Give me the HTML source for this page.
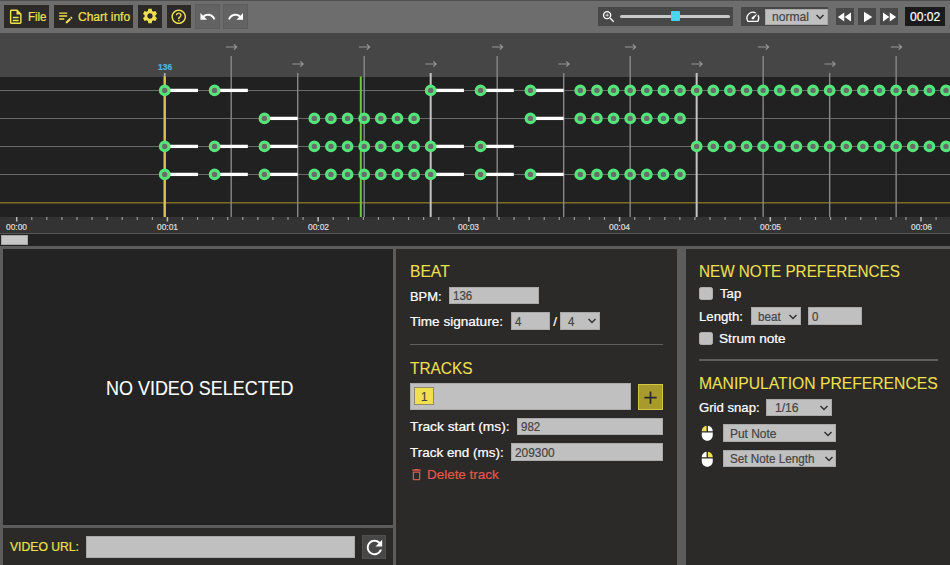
<!DOCTYPE html><html><head><meta charset='utf-8'><title>Chart editor</title><style>
*{box-sizing:border-box;margin:0;padding:0}
html,body{width:950px;height:565px;overflow:hidden;background:#5c5c5c;font-family:"Liberation Sans",sans-serif}
body{position:relative}
.a{position:absolute}
.t{-webkit-text-stroke:0.22px currentColor;position:absolute;white-space:pre;line-height:1;display:block;transform-origin:0 0}
svg{position:absolute;display:block;overflow:visible}
.btn{position:absolute;background:#2b2a29}
.in{position:absolute;background:#c0c0c0;border:1px solid #a9a9a9}
</style></head><body>
<div class="a" style="left:0;top:0;width:950px;height:33px;background:#6d6d6d;border-top:1px solid #4f4f4f"></div>
<div class="a" style="left:4px;top:5px;width:45px;height:23px;background:#2b2a29;"></div>
<svg style="left:6.95px;top:7.85px" width="17.5" height="17.5" viewBox="0 0 24 24"><path fill="#f0e04f" d="M8 16h8v2H8zm0-4h8v2H8zm6-10H6c-1.1 0-2 .9-2 2v16c0 1.1.89 2 1.99 2H18c1.1 0 2-.9 2-2V8l-6-6zm4 18H6V4h7v5h5v11z"/></svg>
<span class="t" style="left:28.00px;top:10.75px;font-size:12.5px;color:#f0e04f;transform:scaleX(0.9185);">File</span>
<div class="a" style="left:54px;top:5px;width:79px;height:23px;background:#2b2a29;"></div>
<svg style="left:56.8px;top:7.7px" width="17.5" height="17.5" viewBox="0 0 24 24"><path fill="#f0e04f" d="M3 10h11v2H3v-2zm0-2h11V6H3v2zm0 8h7v-2H3v2zm15.01-3.13.71-.71c.39-.39 1.02-.39 1.41 0l.71.71c.39.39.39 1.02 0 1.41l-.71.71-2.12-2.12zm-.71.71-5.3 5.3V21h2.12l5.3-5.3-2.12-2.12z"/></svg>
<span class="t" style="left:78.40px;top:10.75px;font-size:12.5px;color:#f0e04f;transform:scaleX(0.9614);">Chart info</span>
<div class="a" style="left:138px;top:5px;width:24px;height:23px;background:#2b2a29;"></div>
<svg style="left:141px;top:7.2px" width="18" height="18" viewBox="0 0 24 24"><path fill="#f0e04f" d="M19.14,12.94c0.04-0.3,0.06-0.61,0.06-0.94c0-0.32-0.02-0.64-0.07-0.94l2.03-1.58c0.18-0.14,0.23-0.41,0.12-0.61 l-1.92-3.32c-0.12-0.22-0.37-0.29-0.59-0.22l-2.39,0.96c-0.5-0.38-1.03-0.7-1.62-0.94L14.4,2.81c-0.04-0.24-0.24-0.41-0.48-0.41 h-3.84c-0.24,0-0.43,0.17-0.47,0.41L9.25,5.35C8.66,5.59,8.12,5.92,7.63,6.29L5.24,5.33c-0.22-0.08-0.47,0-0.59,0.22L2.74,8.87 C2.62,9.08,2.66,9.34,2.86,9.48l2.03,1.58C4.84,11.36,4.8,11.69,4.8,12s0.02,0.64,0.07,0.94l-2.03,1.58 c-0.18,0.14-0.23,0.41-0.12,0.61l1.92,3.32c0.12,0.22,0.37,0.29,0.59,0.22l2.39-0.96c0.5,0.38,1.03,0.7,1.62,0.94l0.36,2.54 c0.05,0.24,0.24,0.41,0.48,0.41h3.84c0.24,0,0.44-0.17,0.47-0.41l0.36-2.54c0.59-0.24,1.13-0.56,1.62-0.94l2.39,0.96 c0.22,0.08,0.47,0,0.59-0.22l1.92-3.32c0.12-0.22,0.07-0.47-0.12-0.61L19.14,12.94z M12,15.6c-1.98,0-3.6-1.62-3.6-3.6 s1.62-3.6,3.6-3.6s3.6,1.62,3.6,3.6S13.98,15.6,12,15.6z"/></svg>
<div class="a" style="left:167px;top:5px;width:24px;height:23px;background:#2b2a29;"></div>
<svg style="left:170.1px;top:7.95px" width="17.5" height="17.5" viewBox="0 0 24 24"><path fill="#f0e04f" d="M11 18h2v-2h-2v2zm1-16C6.48 2 2 6.48 2 12s4.48 10 10 10 10-4.48 10-10S17.52 2 12 2zm0 18c-4.41 0-8-3.59-8-8s3.59-8 8-8 8 3.59 8 8-3.59 8-8 8zm0-14c-2.21 0-4 1.79-4 4h2c0-1.1.9-2 2-2s2 .9 2 2c0 2-3 1.75-3 5h2c0-2.25 3-2.5 3-5 0-2.21-1.79-4-4-4z"/></svg>
<div class="a" style="left:194.7px;top:4.2px;width:24.900000000000006px;height:24.400000000000002px;background:#636363;border:1px solid #5d5d5d;"></div>
<svg style="left:198.9px;top:7.6px" width="17.5" height="17.5" viewBox="0 0 24 24"><path fill="#fff" d="M12.5 8c-2.65 0-5.05.99-6.9 2.6L2 7v9h9l-3.62-3.62c1.39-1.16 3.16-1.88 5.12-1.88 3.54 0 6.55 2.31 7.6 5.5l2.37-.78C21.08 11.03 17.15 8 12.5 8z"/></svg>
<div class="a" style="left:223.1px;top:4.2px;width:24.80000000000001px;height:24.400000000000002px;background:#636363;border:1px solid #5d5d5d;"></div>
<svg style="left:227.1px;top:7.6px" width="17.5" height="17.5" viewBox="0 0 24 24"><path fill="#fff" d="M18.4 10.6C16.55 8.99 14.15 8 11.5 8c-4.65 0-8.58 3.03-9.96 7.22L3.9 16c1.05-3.19 4.05-5.5 7.6-5.5 1.95 0 3.73.72 5.12 1.88L13 16h9V7l-3.6 3.6z"/></svg>
<div class="a" style="left:597.6px;top:7.2px;width:135.39999999999998px;height:18.400000000000002px;background:#484848;"></div>
<svg style="left:601.3px;top:9.4px" width="15.5" height="15.5" viewBox="0 0 24 24"><path fill="#fff" d="M15.5 14h-.79l-.28-.27C15.41 12.59 16 11.11 16 9.5 16 5.91 13.09 3 9.5 3S3 5.91 3 9.5 5.91 16 9.5 16c1.61 0 3.09-.59 4.23-1.57l.27.28v.79l5 4.99L20.49 19l-4.99-5zm-6 0C7.01 14 5 11.99 5 9.5S7.01 5 9.5 5 14 7.01 14 9.5 11.99 14 9.5 14zM12 10h-2v2H9v-2H7V9h2V7h1v2h2v1z"/></svg>
<div class="a" style="left:620.3px;top:15.1px;width:109.5px;height:3.4px;border-radius:2px;background:#c8c8c8"></div>
<div class="a" style="left:670.9px;top:11.4px;width:9.6px;height:9.5px;border-radius:1px;background:#4bd5ec"></div>
<div class="a" style="left:741px;top:7.2px;width:87px;height:18.400000000000002px;background:#484848;"></div>
<svg style="left:744.6px;top:8.8px" width="15.7" height="15.7" viewBox="0 0 24 24"><path fill="#fff" d="M20.38 8.57l-1.23 1.85a8 8 0 0 1-.22 7.58H5.07A8 8 0 0 1 15.58 6.85l1.85-1.23A10 10 0 0 0 3.35 19a2 2 0 0 0 1.72 1h13.85a2 2 0 0 0 1.74-1 10 10 0 0 0-.27-10.44zm-9.79 6.84a2 2 0 0 0 2.83 0l5.66-8.49-8.49 5.66a2 2 0 0 0 0 2.83z"/></svg>
<div class="in" style="left:764.7px;top:8.8px;width:63.2px;height:16px"></div>
<span class="t" style="left:772.00px;top:10.00px;font-size:13px;color:#454545;transform:scaleX(0.9311);">normal</span>
<svg style="left:815px;top:13.2px" width="10" height="8" viewBox="0 0 10 8"><path d="M1.5 2 L5 5.5 L8.5 2" fill="none" stroke="#333" stroke-width="1.5"/></svg>
<div class="a" style="left:836.1px;top:8px;width:17.5px;height:17.4px;background:#484848;"></div>
<svg style="left:836.1px;top:7.65px" width="18" height="18" viewBox="0 0 24 24"><path fill="#fff" d="M11 18V6l-8.5 6 8.5 6zm.5-6l8.5 6V6l-8.5 6z"/></svg>
<div class="a" style="left:857.9px;top:8px;width:18.0px;height:17.4px;background:#484848;"></div>
<svg style="left:858px;top:7.7px" width="18" height="18" viewBox="0 0 24 24"><path fill="#fff" d="M8 5v14l11-7z"/></svg>
<div class="a" style="left:880.2px;top:8px;width:17.699999999999932px;height:17.4px;background:#484848;"></div>
<svg style="left:879.7px;top:7.7px" width="18" height="18" viewBox="0 0 24 24"><path fill="#fff" d="M4 18l8.5-6L4 6v12zm9-12v12l8.5-6L13 6z"/></svg>
<div class="a" style="left:905px;top:7px;width:40px;height:18.7px;background:#1a1a1a;"></div>
<span class="t" style="left:910.00px;top:10.75px;font-size:12.5px;color:#fff;transform:scaleX(0.9655);">00:02</span>
<div class="a" style="left:0;top:33px;width:950px;height:44px;background:#464646"></div>
<div class="a" style="left:0;top:76.5px;width:950px;height:141px;background:#212121"></div>
<div class="a" style="left:0;top:217px;width:950px;height:17px;background:#333;border-bottom:1px solid #555"></div>
<div class="a" style="left:0;top:234px;width:950px;height:12px;background:#222"></div>
<div class="a" style="left:0.5px;top:234.5px;width:27.7px;height:10.6px;background:#c6c6c6;border:1px solid #a6a6a6"></div>
<svg style="left:0;top:0" width="950" height="250" viewBox="0 0 950 250"><rect x="0" y="90" width="950" height="1" fill="#6a6a6a"/><rect x="0" y="118" width="950" height="1" fill="#6a6a6a"/><rect x="0" y="146" width="950" height="1" fill="#6a6a6a"/><rect x="0" y="174" width="950" height="1" fill="#6a6a6a"/><rect x="0" y="202" width="950" height="1.5" fill="#7d6f22"/><rect x="163.81" y="73" width="1.8" height="4" fill="#aaa"/><rect x="163.51" y="76.5" width="2.4" height="140.5" fill="#d9c54f"/><rect x="230.50" y="56" width="1.4" height="161" fill="#888888"/><path d="M225.90 47 H236.60 M233.80 44.3 L236.70 47 L233.80 49.7" fill="none" stroke="#969696" stroke-width="1.15"/><rect x="297.00" y="73" width="1.4" height="144" fill="#888888"/><path d="M292.40 64 H303.10 M300.30 61.3 L303.20 64 L300.30 66.7" fill="none" stroke="#969696" stroke-width="1.15"/><rect x="363.49" y="56" width="1.4" height="161" fill="#888888"/><path d="M358.89 47 H369.59 M366.79 44.3 L369.69 47 L366.79 49.7" fill="none" stroke="#969696" stroke-width="1.15"/><rect x="429.68" y="73" width="2.0" height="144" fill="#c4c4c4"/><path d="M425.38 64 H436.08 M433.28 61.3 L436.18 64 L433.28 66.7" fill="none" stroke="#969696" stroke-width="1.15"/><rect x="496.48" y="56" width="1.4" height="161" fill="#888888"/><path d="M491.88 47 H502.58 M499.78 44.3 L502.68 47 L499.78 49.7" fill="none" stroke="#969696" stroke-width="1.15"/><rect x="562.97" y="73" width="1.4" height="144" fill="#888888"/><path d="M558.37 64 H569.07 M566.27 61.3 L569.17 64 L566.27 66.7" fill="none" stroke="#969696" stroke-width="1.15"/><rect x="629.47" y="56" width="1.4" height="161" fill="#888888"/><path d="M624.87 47 H635.57 M632.77 44.3 L635.67 47 L632.77 49.7" fill="none" stroke="#969696" stroke-width="1.15"/><rect x="695.66" y="73" width="2.0" height="144" fill="#c4c4c4"/><path d="M691.36 64 H702.06 M699.26 61.3 L702.16 64 L699.26 66.7" fill="none" stroke="#969696" stroke-width="1.15"/><rect x="762.45" y="56" width="1.4" height="161" fill="#888888"/><path d="M757.85 47 H768.55 M765.75 44.3 L768.65 47 L765.75 49.7" fill="none" stroke="#969696" stroke-width="1.15"/><rect x="828.95" y="73" width="1.4" height="144" fill="#888888"/><path d="M824.35 64 H835.05 M832.25 61.3 L835.15 64 L832.25 66.7" fill="none" stroke="#969696" stroke-width="1.15"/><rect x="895.44" y="56" width="1.4" height="161" fill="#888888"/><path d="M890.84 47 H901.54 M898.74 44.3 L901.64 47 L898.74 49.7" fill="none" stroke="#969696" stroke-width="1.15"/><rect x="961.64" y="73" width="2.0" height="144" fill="#c4c4c4"/><path d="M957.34 64 H968.04 M965.24 61.3 L968.14 64 L965.24 66.7" fill="none" stroke="#969696" stroke-width="1.15"/><rect x="359.8" y="76.5" width="2" height="140.5" fill="#6cc83c"/><rect x="164.71" y="88.75" width="33.25" height="3.3" fill="#fff"/><circle cx="164.71" cy="90.40" r="4.3" fill="#6a6a6a" stroke="#54e57a" stroke-width="3.2"/><rect x="214.58" y="88.75" width="33.25" height="3.3" fill="#fff"/><circle cx="214.58" cy="90.40" r="4.3" fill="#6a6a6a" stroke="#54e57a" stroke-width="3.2"/><rect x="430.68" y="88.75" width="33.25" height="3.3" fill="#fff"/><circle cx="430.68" cy="90.40" r="4.3" fill="#6a6a6a" stroke="#54e57a" stroke-width="3.2"/><rect x="480.55" y="88.75" width="33.25" height="3.3" fill="#fff"/><circle cx="480.55" cy="90.40" r="4.3" fill="#6a6a6a" stroke="#54e57a" stroke-width="3.2"/><rect x="530.42" y="88.75" width="33.25" height="3.3" fill="#fff"/><circle cx="530.42" cy="90.40" r="4.3" fill="#6a6a6a" stroke="#54e57a" stroke-width="3.2"/><circle cx="580.30" cy="90.40" r="4.3" fill="#6a6a6a" stroke="#54e57a" stroke-width="3.2"/><circle cx="596.92" cy="90.40" r="4.3" fill="#6a6a6a" stroke="#54e57a" stroke-width="3.2"/><circle cx="613.54" cy="90.40" r="4.3" fill="#6a6a6a" stroke="#54e57a" stroke-width="3.2"/><circle cx="630.17" cy="90.40" r="4.3" fill="#6a6a6a" stroke="#54e57a" stroke-width="3.2"/><circle cx="646.79" cy="90.40" r="4.3" fill="#6a6a6a" stroke="#54e57a" stroke-width="3.2"/><circle cx="663.41" cy="90.40" r="4.3" fill="#6a6a6a" stroke="#54e57a" stroke-width="3.2"/><circle cx="680.04" cy="90.40" r="4.3" fill="#6a6a6a" stroke="#54e57a" stroke-width="3.2"/><circle cx="696.66" cy="90.40" r="4.3" fill="#6a6a6a" stroke="#54e57a" stroke-width="3.2"/><circle cx="713.28" cy="90.40" r="4.3" fill="#6a6a6a" stroke="#54e57a" stroke-width="3.2"/><circle cx="729.91" cy="90.40" r="4.3" fill="#6a6a6a" stroke="#54e57a" stroke-width="3.2"/><circle cx="746.53" cy="90.40" r="4.3" fill="#6a6a6a" stroke="#54e57a" stroke-width="3.2"/><circle cx="763.15" cy="90.40" r="4.3" fill="#6a6a6a" stroke="#54e57a" stroke-width="3.2"/><circle cx="779.78" cy="90.40" r="4.3" fill="#6a6a6a" stroke="#54e57a" stroke-width="3.2"/><circle cx="796.40" cy="90.40" r="4.3" fill="#6a6a6a" stroke="#54e57a" stroke-width="3.2"/><circle cx="813.02" cy="90.40" r="4.3" fill="#6a6a6a" stroke="#54e57a" stroke-width="3.2"/><circle cx="829.65" cy="90.40" r="4.3" fill="#6a6a6a" stroke="#54e57a" stroke-width="3.2"/><circle cx="846.27" cy="90.40" r="4.3" fill="#6a6a6a" stroke="#54e57a" stroke-width="3.2"/><circle cx="862.90" cy="90.40" r="4.3" fill="#6a6a6a" stroke="#54e57a" stroke-width="3.2"/><circle cx="879.52" cy="90.40" r="4.3" fill="#6a6a6a" stroke="#54e57a" stroke-width="3.2"/><circle cx="896.14" cy="90.40" r="4.3" fill="#6a6a6a" stroke="#54e57a" stroke-width="3.2"/><circle cx="912.77" cy="90.40" r="4.3" fill="#6a6a6a" stroke="#54e57a" stroke-width="3.2"/><circle cx="929.39" cy="90.40" r="4.3" fill="#6a6a6a" stroke="#54e57a" stroke-width="3.2"/><circle cx="946.01" cy="90.40" r="4.3" fill="#6a6a6a" stroke="#54e57a" stroke-width="3.2"/><rect x="264.45" y="116.75" width="33.25" height="3.3" fill="#fff"/><circle cx="264.45" cy="118.40" r="4.3" fill="#6a6a6a" stroke="#54e57a" stroke-width="3.2"/><circle cx="314.32" cy="118.40" r="4.3" fill="#6a6a6a" stroke="#54e57a" stroke-width="3.2"/><circle cx="330.94" cy="118.40" r="4.3" fill="#6a6a6a" stroke="#54e57a" stroke-width="3.2"/><circle cx="347.57" cy="118.40" r="4.3" fill="#6a6a6a" stroke="#54e57a" stroke-width="3.2"/><circle cx="364.19" cy="118.40" r="4.3" fill="#6a6a6a" stroke="#54e57a" stroke-width="3.2"/><circle cx="380.81" cy="118.40" r="4.3" fill="#6a6a6a" stroke="#54e57a" stroke-width="3.2"/><circle cx="397.44" cy="118.40" r="4.3" fill="#6a6a6a" stroke="#54e57a" stroke-width="3.2"/><circle cx="414.06" cy="118.40" r="4.3" fill="#6a6a6a" stroke="#54e57a" stroke-width="3.2"/><rect x="530.42" y="116.75" width="33.25" height="3.3" fill="#fff"/><circle cx="530.42" cy="118.40" r="4.3" fill="#6a6a6a" stroke="#54e57a" stroke-width="3.2"/><circle cx="580.30" cy="118.40" r="4.3" fill="#6a6a6a" stroke="#54e57a" stroke-width="3.2"/><circle cx="596.92" cy="118.40" r="4.3" fill="#6a6a6a" stroke="#54e57a" stroke-width="3.2"/><circle cx="613.54" cy="118.40" r="4.3" fill="#6a6a6a" stroke="#54e57a" stroke-width="3.2"/><circle cx="630.17" cy="118.40" r="4.3" fill="#6a6a6a" stroke="#54e57a" stroke-width="3.2"/><circle cx="646.79" cy="118.40" r="4.3" fill="#6a6a6a" stroke="#54e57a" stroke-width="3.2"/><circle cx="663.41" cy="118.40" r="4.3" fill="#6a6a6a" stroke="#54e57a" stroke-width="3.2"/><circle cx="680.04" cy="118.40" r="4.3" fill="#6a6a6a" stroke="#54e57a" stroke-width="3.2"/><rect x="164.71" y="144.75" width="33.25" height="3.3" fill="#fff"/><circle cx="164.71" cy="146.40" r="4.3" fill="#6a6a6a" stroke="#54e57a" stroke-width="3.2"/><rect x="214.58" y="144.75" width="33.25" height="3.3" fill="#fff"/><circle cx="214.58" cy="146.40" r="4.3" fill="#6a6a6a" stroke="#54e57a" stroke-width="3.2"/><rect x="264.45" y="144.75" width="33.25" height="3.3" fill="#fff"/><circle cx="264.45" cy="146.40" r="4.3" fill="#6a6a6a" stroke="#54e57a" stroke-width="3.2"/><circle cx="314.32" cy="146.40" r="4.3" fill="#6a6a6a" stroke="#54e57a" stroke-width="3.2"/><circle cx="330.94" cy="146.40" r="4.3" fill="#6a6a6a" stroke="#54e57a" stroke-width="3.2"/><circle cx="347.57" cy="146.40" r="4.3" fill="#6a6a6a" stroke="#54e57a" stroke-width="3.2"/><circle cx="364.19" cy="146.40" r="4.3" fill="#6a6a6a" stroke="#54e57a" stroke-width="3.2"/><circle cx="380.81" cy="146.40" r="4.3" fill="#6a6a6a" stroke="#54e57a" stroke-width="3.2"/><circle cx="397.44" cy="146.40" r="4.3" fill="#6a6a6a" stroke="#54e57a" stroke-width="3.2"/><circle cx="414.06" cy="146.40" r="4.3" fill="#6a6a6a" stroke="#54e57a" stroke-width="3.2"/><rect x="430.68" y="144.75" width="33.25" height="3.3" fill="#fff"/><circle cx="430.68" cy="146.40" r="4.3" fill="#6a6a6a" stroke="#54e57a" stroke-width="3.2"/><rect x="480.55" y="144.75" width="33.25" height="3.3" fill="#fff"/><circle cx="480.55" cy="146.40" r="4.3" fill="#6a6a6a" stroke="#54e57a" stroke-width="3.2"/><circle cx="696.66" cy="146.40" r="4.3" fill="#6a6a6a" stroke="#54e57a" stroke-width="3.2"/><circle cx="713.28" cy="146.40" r="4.3" fill="#6a6a6a" stroke="#54e57a" stroke-width="3.2"/><circle cx="729.91" cy="146.40" r="4.3" fill="#6a6a6a" stroke="#54e57a" stroke-width="3.2"/><circle cx="746.53" cy="146.40" r="4.3" fill="#6a6a6a" stroke="#54e57a" stroke-width="3.2"/><circle cx="763.15" cy="146.40" r="4.3" fill="#6a6a6a" stroke="#54e57a" stroke-width="3.2"/><circle cx="779.78" cy="146.40" r="4.3" fill="#6a6a6a" stroke="#54e57a" stroke-width="3.2"/><circle cx="796.40" cy="146.40" r="4.3" fill="#6a6a6a" stroke="#54e57a" stroke-width="3.2"/><circle cx="813.02" cy="146.40" r="4.3" fill="#6a6a6a" stroke="#54e57a" stroke-width="3.2"/><circle cx="829.65" cy="146.40" r="4.3" fill="#6a6a6a" stroke="#54e57a" stroke-width="3.2"/><circle cx="846.27" cy="146.40" r="4.3" fill="#6a6a6a" stroke="#54e57a" stroke-width="3.2"/><circle cx="862.90" cy="146.40" r="4.3" fill="#6a6a6a" stroke="#54e57a" stroke-width="3.2"/><circle cx="879.52" cy="146.40" r="4.3" fill="#6a6a6a" stroke="#54e57a" stroke-width="3.2"/><circle cx="896.14" cy="146.40" r="4.3" fill="#6a6a6a" stroke="#54e57a" stroke-width="3.2"/><circle cx="912.77" cy="146.40" r="4.3" fill="#6a6a6a" stroke="#54e57a" stroke-width="3.2"/><circle cx="929.39" cy="146.40" r="4.3" fill="#6a6a6a" stroke="#54e57a" stroke-width="3.2"/><circle cx="946.01" cy="146.40" r="4.3" fill="#6a6a6a" stroke="#54e57a" stroke-width="3.2"/><rect x="164.71" y="172.75" width="33.25" height="3.3" fill="#fff"/><circle cx="164.71" cy="174.40" r="4.3" fill="#6a6a6a" stroke="#54e57a" stroke-width="3.2"/><rect x="214.58" y="172.75" width="33.25" height="3.3" fill="#fff"/><circle cx="214.58" cy="174.40" r="4.3" fill="#6a6a6a" stroke="#54e57a" stroke-width="3.2"/><rect x="264.45" y="172.75" width="33.25" height="3.3" fill="#fff"/><circle cx="264.45" cy="174.40" r="4.3" fill="#6a6a6a" stroke="#54e57a" stroke-width="3.2"/><circle cx="314.32" cy="174.40" r="4.3" fill="#6a6a6a" stroke="#54e57a" stroke-width="3.2"/><circle cx="330.94" cy="174.40" r="4.3" fill="#6a6a6a" stroke="#54e57a" stroke-width="3.2"/><circle cx="347.57" cy="174.40" r="4.3" fill="#6a6a6a" stroke="#54e57a" stroke-width="3.2"/><circle cx="364.19" cy="174.40" r="4.3" fill="#6a6a6a" stroke="#54e57a" stroke-width="3.2"/><circle cx="380.81" cy="174.40" r="4.3" fill="#6a6a6a" stroke="#54e57a" stroke-width="3.2"/><circle cx="397.44" cy="174.40" r="4.3" fill="#6a6a6a" stroke="#54e57a" stroke-width="3.2"/><circle cx="414.06" cy="174.40" r="4.3" fill="#6a6a6a" stroke="#54e57a" stroke-width="3.2"/><rect x="430.68" y="172.75" width="33.25" height="3.3" fill="#fff"/><circle cx="430.68" cy="174.40" r="4.3" fill="#6a6a6a" stroke="#54e57a" stroke-width="3.2"/><rect x="480.55" y="172.75" width="33.25" height="3.3" fill="#fff"/><circle cx="480.55" cy="174.40" r="4.3" fill="#6a6a6a" stroke="#54e57a" stroke-width="3.2"/><rect x="530.42" y="172.75" width="33.25" height="3.3" fill="#fff"/><circle cx="530.42" cy="174.40" r="4.3" fill="#6a6a6a" stroke="#54e57a" stroke-width="3.2"/><circle cx="580.30" cy="174.40" r="4.3" fill="#6a6a6a" stroke="#54e57a" stroke-width="3.2"/><circle cx="596.92" cy="174.40" r="4.3" fill="#6a6a6a" stroke="#54e57a" stroke-width="3.2"/><circle cx="613.54" cy="174.40" r="4.3" fill="#6a6a6a" stroke="#54e57a" stroke-width="3.2"/><circle cx="630.17" cy="174.40" r="4.3" fill="#6a6a6a" stroke="#54e57a" stroke-width="3.2"/><circle cx="646.79" cy="174.40" r="4.3" fill="#6a6a6a" stroke="#54e57a" stroke-width="3.2"/><circle cx="663.41" cy="174.40" r="4.3" fill="#6a6a6a" stroke="#54e57a" stroke-width="3.2"/><circle cx="680.04" cy="174.40" r="4.3" fill="#6a6a6a" stroke="#54e57a" stroke-width="3.2"/><rect x="15.95" y="217" width="1.5" height="4.5" fill="#bbb"/><rect x="31.17" y="217" width="1.2" height="3" fill="#999"/><rect x="46.24" y="217" width="1.2" height="3" fill="#999"/><rect x="61.32" y="217" width="1.2" height="3" fill="#999"/><rect x="76.39" y="217" width="1.2" height="3" fill="#999"/><rect x="91.46" y="217" width="1.2" height="3" fill="#999"/><rect x="106.53" y="217" width="1.2" height="3" fill="#999"/><rect x="121.60" y="217" width="1.2" height="3" fill="#999"/><rect x="136.68" y="217" width="1.2" height="3" fill="#999"/><rect x="151.75" y="217" width="1.2" height="3" fill="#999"/><rect x="166.67" y="217" width="1.5" height="4.5" fill="#bbb"/><rect x="181.89" y="217" width="1.2" height="3" fill="#999"/><rect x="196.96" y="217" width="1.2" height="3" fill="#999"/><rect x="212.04" y="217" width="1.2" height="3" fill="#999"/><rect x="227.11" y="217" width="1.2" height="3" fill="#999"/><rect x="242.18" y="217" width="1.2" height="3" fill="#999"/><rect x="257.25" y="217" width="1.2" height="3" fill="#999"/><rect x="272.32" y="217" width="1.2" height="3" fill="#999"/><rect x="287.40" y="217" width="1.2" height="3" fill="#999"/><rect x="302.47" y="217" width="1.2" height="3" fill="#999"/><rect x="317.39" y="217" width="1.5" height="4.5" fill="#bbb"/><rect x="332.61" y="217" width="1.2" height="3" fill="#999"/><rect x="347.68" y="217" width="1.2" height="3" fill="#999"/><rect x="362.76" y="217" width="1.2" height="3" fill="#999"/><rect x="377.83" y="217" width="1.2" height="3" fill="#999"/><rect x="392.90" y="217" width="1.2" height="3" fill="#999"/><rect x="407.97" y="217" width="1.2" height="3" fill="#999"/><rect x="423.04" y="217" width="1.2" height="3" fill="#999"/><rect x="438.12" y="217" width="1.2" height="3" fill="#999"/><rect x="453.19" y="217" width="1.2" height="3" fill="#999"/><rect x="468.11" y="217" width="1.5" height="4.5" fill="#bbb"/><rect x="483.33" y="217" width="1.2" height="3" fill="#999"/><rect x="498.40" y="217" width="1.2" height="3" fill="#999"/><rect x="513.48" y="217" width="1.2" height="3" fill="#999"/><rect x="528.55" y="217" width="1.2" height="3" fill="#999"/><rect x="543.62" y="217" width="1.2" height="3" fill="#999"/><rect x="558.69" y="217" width="1.2" height="3" fill="#999"/><rect x="573.76" y="217" width="1.2" height="3" fill="#999"/><rect x="588.84" y="217" width="1.2" height="3" fill="#999"/><rect x="603.91" y="217" width="1.2" height="3" fill="#999"/><rect x="618.83" y="217" width="1.5" height="4.5" fill="#bbb"/><rect x="634.05" y="217" width="1.2" height="3" fill="#999"/><rect x="649.12" y="217" width="1.2" height="3" fill="#999"/><rect x="664.20" y="217" width="1.2" height="3" fill="#999"/><rect x="679.27" y="217" width="1.2" height="3" fill="#999"/><rect x="694.34" y="217" width="1.2" height="3" fill="#999"/><rect x="709.41" y="217" width="1.2" height="3" fill="#999"/><rect x="724.48" y="217" width="1.2" height="3" fill="#999"/><rect x="739.56" y="217" width="1.2" height="3" fill="#999"/><rect x="754.63" y="217" width="1.2" height="3" fill="#999"/><rect x="769.55" y="217" width="1.5" height="4.5" fill="#bbb"/><rect x="784.77" y="217" width="1.2" height="3" fill="#999"/><rect x="799.84" y="217" width="1.2" height="3" fill="#999"/><rect x="814.92" y="217" width="1.2" height="3" fill="#999"/><rect x="829.99" y="217" width="1.2" height="3" fill="#999"/><rect x="845.06" y="217" width="1.2" height="3" fill="#999"/><rect x="860.13" y="217" width="1.2" height="3" fill="#999"/><rect x="875.20" y="217" width="1.2" height="3" fill="#999"/><rect x="890.28" y="217" width="1.2" height="3" fill="#999"/><rect x="905.35" y="217" width="1.2" height="3" fill="#999"/><rect x="920.27" y="217" width="1.5" height="4.5" fill="#bbb"/><rect x="935.49" y="217" width="1.2" height="3" fill="#999"/><rect x="950.56" y="217" width="1.2" height="3" fill="#999"/></svg>
<span class="t" style="left:6.20px;top:222.75px;font-size:8.5px;color:#ddd;transform:scaleX(0.9873);">00:00</span>
<span class="t" style="left:156.92px;top:222.75px;font-size:8.5px;color:#ddd;transform:scaleX(0.9873);">00:01</span>
<span class="t" style="left:307.64px;top:222.75px;font-size:8.5px;color:#ddd;transform:scaleX(0.9873);">00:02</span>
<span class="t" style="left:458.36px;top:222.75px;font-size:8.5px;color:#ddd;transform:scaleX(0.9873);">00:03</span>
<span class="t" style="left:609.08px;top:222.75px;font-size:8.5px;color:#ddd;transform:scaleX(0.9873);">00:04</span>
<span class="t" style="left:759.80px;top:222.75px;font-size:8.5px;color:#ddd;transform:scaleX(0.9873);">00:05</span>
<span class="t" style="left:910.52px;top:222.75px;font-size:8.5px;color:#ddd;transform:scaleX(0.9873);">00:06</span>
<span class="t" style="left:157.70px;top:63.05px;font-size:8.5px;color:#4ab4de;transform:scaleX(0.9942);font-weight:bold;">136</span>
<div class="a" style="left:3px;top:249px;width:390px;height:276px;background:#232323"></div>
<span class="t" style="left:106.30px;top:379.15px;font-size:19.7px;color:#fff;transform:scaleX(0.9120);-webkit-text-stroke:0.08px currentColor;">NO VIDEO SELECTED</span>
<div class="a" style="left:3px;top:528.3px;width:390px;height:37px;background:#2b2a29"></div>
<span class="t" style="left:10.00px;top:540.35px;font-size:13.5px;color:#f0e04f;transform:scaleX(0.9018);">VIDEO URL:</span>
<div class="in" style="left:86px;top:536px;width:269px;height:22px"></div>
<div class="a" style="left:362px;top:535px;width:24px;height:24px;background:#474747;border:1px solid #505050;"></div>
<svg style="left:362.9px;top:535.5px" width="23" height="23" viewBox="0 0 24 24"><path fill="#fff" d="M17.65 6.35C16.2 4.9 14.21 4 12 4c-4.42 0-7.99 3.58-7.99 8s3.57 8 7.99 8c3.73 0 6.84-2.55 7.73-6h-2.08c-.82 2.33-3.04 4-5.65 4-3.31 0-6-2.69-6-6s2.69-6 6-6c1.66 0 3.14.69 4.22 1.78L13 11h7V4l-2.35 2.35z"/></svg>
<div class="a" style="left:396px;top:249px;width:281px;height:316px;background:#2b2a29"></div>
<div class="a" style="left:685.5px;top:249px;width:264.5px;height:316px;background:#2b2a29"></div>
<span class="t" style="left:410.30px;top:262.75px;font-size:16.5px;color:#f0e04f;transform:scaleX(0.9482);-webkit-text-stroke:0.08px currentColor;">BEAT</span>
<span class="t" style="left:410.00px;top:290.00px;font-size:13px;color:#fff;transform:scaleX(0.9942);">BPM:</span>
<div class="in" style="left:449px;top:287.3px;width:89.5px;height:17px"></div>
<span class="t" style="left:453.20px;top:289.75px;font-size:12.5px;color:#454545;transform:scaleX(0.9200);">136</span>
<span class="t" style="left:410.00px;top:315.00px;font-size:13px;color:#fff;transform:scaleX(1.0437);">Time signature:</span>
<div class="in" style="left:510.5px;top:312.4px;width:39.4px;height:17.5px"></div>
<span class="t" style="left:515.00px;top:315.75px;font-size:12.5px;color:#454545;transform:scaleX(0.9200);">4</span>
<span class="t" style="left:553.30px;top:314.75px;font-size:13.5px;color:#fff;">/</span>
<div class="in" style="left:560.3px;top:312.4px;width:39.3px;height:17.5px"></div>
<span class="t" style="left:568.00px;top:315.75px;font-size:12.5px;color:#454545;transform:scaleX(0.9200);">4</span>
<svg style="left:586.5px;top:317.3px" width="10" height="8" viewBox="0 0 10 8"><path d="M1.5 2 L5 5.5 L8.5 2" fill="none" stroke="#333" stroke-width="1.5"/></svg>
<div class="a" style="left:410px;top:343.8px;width:253px;height:1.6px;background:#5e5e5e"></div>
<span class="t" style="left:410.30px;top:359.75px;font-size:16.5px;color:#f0e04f;transform:scaleX(0.9339);-webkit-text-stroke:0.08px currentColor;">TRACKS</span>
<div class="in" style="left:410px;top:383.3px;width:221px;height:26.5px"></div>
<div class="a" style="left:414px;top:387px;width:19.6px;height:18.2px;background:#f0e050;border:1px solid #8f8b68"></div>
<span class="t" style="left:420.60px;top:390.00px;font-size:13px;color:#444;transform:scaleX(0.9000);">1</span>
<div class="a" style="left:638.1px;top:384.2px;width:25.1px;height:25.8px;background:#a89a2c;border:1px solid #d4c643"></div>
<svg style="left:639.5px;top:386.6px" width="21" height="21" viewBox="0 0 24 24"><path fill="#2a2a2a" d="M19 13h-6v6h-2v-6H5v-2h6V5h2v6h6v2z"/></svg>
<span class="t" style="left:410.00px;top:420.00px;font-size:13px;color:#fff;transform:scaleX(1.0582);">Track start (ms):</span>
<div class="in" style="left:517px;top:417.7px;width:146px;height:17.6px"></div>
<span class="t" style="left:521.00px;top:420.75px;font-size:12.5px;color:#454545;transform:scaleX(0.9200);">982</span>
<span class="t" style="left:410.00px;top:446.00px;font-size:13px;color:#fff;transform:scaleX(1.0350);">Track end (ms):</span>
<div class="in" style="left:510.5px;top:443.3px;width:152.5px;height:17.6px"></div>
<span class="t" style="left:514.80px;top:446.75px;font-size:12.5px;color:#454545;transform:scaleX(0.9500);">209300</span>
<svg style="left:409.3px;top:467px" width="15" height="15" viewBox="0 0 24 24"><path fill="#e0584a" d="M6 19c0 1.1.9 2 2 2h8c1.1 0 2-.9 2-2V7H6v12zM8 9h8v10H8V9zm7.5-5l-1-1h-5l-1 1H5v2h14V4z"/></svg>
<span class="t" style="left:427.00px;top:468.00px;font-size:13px;color:#e0584a;transform:scaleX(1.0337);">Delete track</span>
<span class="t" style="left:699.30px;top:262.75px;font-size:16.5px;color:#f0e04f;transform:scaleX(0.9246);-webkit-text-stroke:0.08px currentColor;">NEW NOTE PREFERENCES</span>
<div class="a" style="left:699.1px;top:286.6px;width:13.8px;height:13.6px;background:#c0c0c0;border-radius:2.2px;border:1px solid #adadad"></div>
<span class="t" style="left:719.80px;top:287.00px;font-size:13px;color:#fff;transform:scaleX(1.0114);">Tap</span>
<span class="t" style="left:699.00px;top:310.00px;font-size:13px;color:#fff;transform:scaleX(1.0144);">Length:</span>
<div class="in" style="left:751px;top:307px;width:49.6px;height:17.7px"></div>
<span class="t" style="left:758.00px;top:310.75px;font-size:12.5px;color:#454545;transform:scaleX(0.9300);">beat</span>
<svg style="left:787.5px;top:312.7px" width="10" height="8" viewBox="0 0 10 8"><path d="M1.5 2 L5 5.5 L8.5 2" fill="none" stroke="#333" stroke-width="1.5"/></svg>
<div class="in" style="left:808px;top:307px;width:54px;height:17.7px"></div>
<span class="t" style="left:812.00px;top:310.75px;font-size:12.5px;color:#454545;transform:scaleX(0.9200);">0</span>
<div class="a" style="left:699.1px;top:331.9px;width:13.8px;height:13.6px;background:#c0c0c0;border-radius:2.2px;border:1px solid #adadad"></div>
<span class="t" style="left:719.00px;top:332.00px;font-size:13px;color:#fff;transform:scaleX(1.0490);">Strum note</span>
<div class="a" style="left:699px;top:359px;width:239px;height:2px;background:#5e5e5e"></div>
<span class="t" style="left:699.30px;top:374.75px;font-size:16.5px;color:#f0e04f;transform:scaleX(0.9514);-webkit-text-stroke:0.08px currentColor;">MANIPULATION PREFERENCES</span>
<span class="t" style="left:699.00px;top:401.00px;font-size:13px;color:#fff;transform:scaleX(1.0105);">Grid snap:</span>
<div class="in" style="left:766.4px;top:399.2px;width:65.8px;height:17px"></div>
<span class="t" style="left:774.80px;top:401.75px;font-size:12.5px;color:#454545;transform:scaleX(0.9700);">1/16</span>
<svg style="left:819.3px;top:404.2px" width="10" height="8" viewBox="0 0 10 8"><path d="M1.5 2 L5 5.5 L8.5 2" fill="none" stroke="#333" stroke-width="1.5"/></svg>
<svg style="left:698.8px;top:425px" width="16.5" height="16.5" viewBox="0 0 24 24"><path fill="#fff" d="M13 1.07V9h7c0-4.08-3.05-7.44-7-7.93z"/><path fill="#fff" d="M4 15c0 4.42 3.58 8 8 8s8-3.58 8-8v-4H4v4z"/><path fill="#f0e04f" d="M11 1.07C7.050 1.56 4 4.92 4 9h7V1.07z"/></svg>
<div class="in" style="left:723.2px;top:424px;width:112.5px;height:17.8px"></div>
<span class="t" style="left:730.00px;top:427.75px;font-size:12.5px;color:#454545;transform:scaleX(0.9550);">Put Note</span>
<svg style="left:823.2px;top:429.5px" width="10" height="8" viewBox="0 0 10 8"><path d="M1.5 2 L5 5.5 L8.5 2" fill="none" stroke="#333" stroke-width="1.5"/></svg>
<svg style="left:698.8px;top:450.8px" width="16.5" height="16.5" viewBox="0 0 24 24"><path fill="#f0e04f" d="M13 1.07V9h7c0-4.08-3.05-7.44-7-7.93z"/><path fill="#fff" d="M4 15c0 4.42 3.58 8 8 8s8-3.58 8-8v-4H4v4z"/><path fill="#fff" d="M11 1.07C7.050 1.56 4 4.92 4 9h7V1.07z"/></svg>
<div class="in" style="left:723.2px;top:449.9px;width:112.5px;height:17.6px"></div>
<span class="t" style="left:730.00px;top:452.75px;font-size:12.5px;color:#454545;transform:scaleX(0.9350);">Set Note Length</span>
<svg style="left:823.6px;top:454.8px" width="10" height="8" viewBox="0 0 10 8"><path d="M1.5 2 L5 5.5 L8.5 2" fill="none" stroke="#333" stroke-width="1.5"/></svg>
</body></html>
